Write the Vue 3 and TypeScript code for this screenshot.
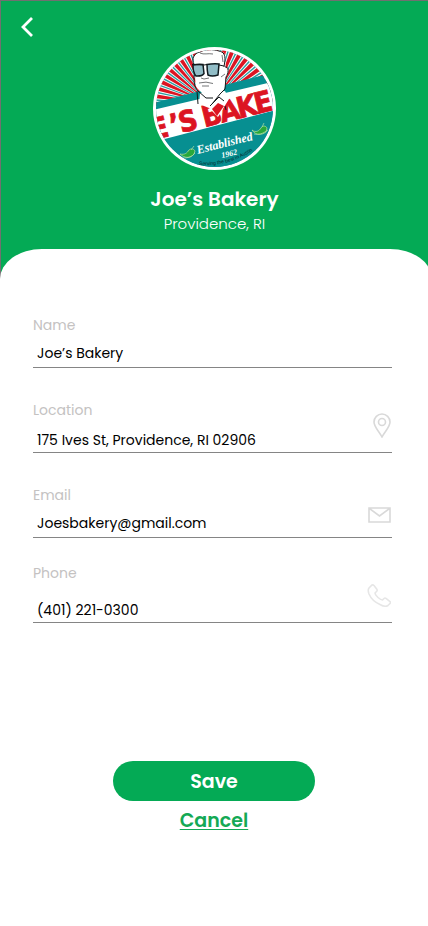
<script setup lang="ts">
import { ref } from 'vue'

type IconName = 'none' | 'pin' | 'mail' | 'phone'

interface Field {
  id: string
  label: string
  type: string
  value: string
  icon: IconName
  variant: string
}

const fields = ref<Field[]>([
  { id: 'name', label: 'Name', type: 'text', value: 'Joe’s Bakery', icon: 'none', variant: '' },
  { id: 'location', label: 'Location', type: 'text', value: '175 Ives St, Providence, RI 02906', icon: 'pin', variant: 'low' },
  { id: 'email', label: 'Email', type: 'email', value: 'Joesbakery@gmail.com', icon: 'mail', variant: '' },
  { id: 'phone', label: 'Phone', type: 'tel', value: '(401) 221-0300', icon: 'phone', variant: 'low tall' },
])

// Sunburst wedges fanning out behind the portrait.
function wedge(deg: number, half: number): string {
  const cx = 58
  const cy = 57
  const point = (a: number, r: number) => {
    const rad = (a * Math.PI) / 180
    return `${(cx + r * Math.cos(rad)).toFixed(1)} ${(cy - r * Math.sin(rad)).toFixed(1)}`
  }
  return `M${point(deg, 4)}L${point(deg - half, 80)}L${point(deg + half, 80)}Z`
}
const rays = Array.from({ length: 25 }, (_, i) => -4 + i * 8)
</script>

<template>
  <main class="page">
    <header class="hero">
      <button class="back" type="button" aria-label="Back">
        <svg width="12" height="20" viewBox="0 0 12 20" aria-hidden="true">
          <path d="M11 1L2 10l9 9" fill="none" stroke="#fff" stroke-width="2.8" />
        </svg>
      </button>
      <svg class="logo" viewBox="0 0 123 123" role="img" aria-label="Joe’s Bakery logo">
        <defs>
          <clipPath id="disc"><circle cx="61.5" cy="61.5" r="58.5" /></clipPath>
          <path id="tagline" d="M46 118Q81 120 109 97" />
        </defs>
        <circle cx="61.500" cy="61.500" r="61.500" fill="#fff" />
        <g clip-path="url(#disc)">
          <rect width="123" height="123" fill="#2b9da0" />
          <path v-for="a in rays" :key="'w' + a" :d="wedge(a, 3.3)" fill="#fff" />
          <path v-for="a in rays" :key="'r' + a" :d="wedge(a, 2.1)" fill="#dc1422" />
          <path d="M0 56L123 25V130H0Z" fill="#078f91" />
          <path d="M0 63L123 34V63L0 95Z" fill="#fff" />
          <g class="brand" transform="rotate(-14 8 92)">
            <text x="0 20 29 53 71 89 107" y="91">E’SBAKE</text>
          </g>
          <path d="M47 46L46 57l10 4 9 9 11-18-4-8Z" fill="#fff" />
          <path d="M59 62l6-6 6 3-7 10Z" fill="#dc1422" />
          <path d="M57 59l9-9M66 50l5 4M72 59l1 4" class="ink" />
          <path d="M42 18C39 12 41 6 47 5c5-3 14-3 20-1 5 1 6 5 5 10l1 7c3 0 3 6 0 9-1 6 0 11-3 14l-7 8-11-3-8-8C41 36 43 27 42 18Z" fill="#fff" />
          <path d="M41 18C38 12 41 6 47 5c5-3 13-3 19-1 5 1 6 4 6 9l-1 7M41 28c0 7 0 12 4 16l8 7 7 0M44 44l1 13M72 20c4-1 4 6 1 10l-1 12-5 5-8 10" class="ink" />
          <path d="M47 6c4 2 8 0 13 1M69 8l1 7M68 30l4-3" class="ink fine" />
          <path d="M40 18q5-1 10-.5l1 9q-2 3-8 2.500-3-3-3-11ZM54 17.500q6-1 12-.5l-1 11q-6 2-10 0-1-5-1-10.500Z" fill="#91bdc7" stroke="#101b20" stroke-width="1.500" />
          <path d="M39 17.500l12 .5 3-.5M66 18l5 1" class="ink" />
          <path d="M48 31l3 1 5-1M46 36q7-2 14 .5M49 39h7" class="ink fine" />
          <g transform="rotate(-14 72 98)">
            <text x="72" y="100" text-anchor="middle" class="script">Established</text>
            <text x="74" y="110" text-anchor="middle" class="year">1962</text>
          </g>
          <g fill="#28a83a" stroke="#b9e3a5" stroke-width=".7">
            <path d="M27 107c5 1 7-1 9-4 2-2 5-1 6 1l-1 3c-4 5-10 4-14 0Z" />
            <path d="M30 111c5 0 9-1 12-5M38 103l3-4" fill="none" />
            <path d="M99 83c4 3 7 1 9-2 2-3 5-2 6 0l-1 4c-4 3-10 4-14-2Z" />
            <path d="M101 87c5 1 8 0 14-4M109 80l2-4" fill="none" />
          </g>
          <text class="tag"><textPath href="#tagline">Serving the best in Austin</textPath></text>
        </g>
      </svg>
      <h1 class="title">Joe’s Bakery</h1>
      <p class="place">Providence, RI</p>
    </header>

    <form class="sheet" @submit.prevent>
      <div class="fields">
        <div v-for="f in fields" :key="f.id" class="field" :class="f.variant">
          <label :for="f.id">{{ f.label }}</label>
          <input :id="f.id" v-model="f.value" :type="f.type" />
          <svg v-if="f.icon === 'pin'" class="icon" width="18" height="25" viewBox="0 0 18 25" aria-hidden="true">
            <path d="M9 24C6 18 1 14 1 9a8 8 0 0 1 16 0c0 5-5 9-8 15Z" />
            <circle cx="9" cy="9" r="3.500" />
          </svg>
          <svg v-else-if="f.icon === 'mail'" class="icon" width="23" height="16" viewBox="0 0 23 16" aria-hidden="true">
            <path d="M1 1h21v14H1ZM1.500 1.500l10 7.500 10-7.500" />
          </svg>
          <svg v-else-if="f.icon === 'phone'" class="icon faint" width="24" height="24" viewBox="0 0 24 24" aria-hidden="true">
            <path d="M2 4l3-3q1-.5 2 .5l3 4q.5 1-.5 2l-1.500 1.500q0 2 3 4.500t4.500 2.500l1.500-1.500q1-1 2 0l4 3q1 1 0 2l-2 2q-3 2-8-1Q5 17 2 10 .5 6 2 4Z" />
          </svg>
        </div>
      </div>
      <div class="actions">
        <button class="save" type="submit">Save</button>
        <a class="cancel" href="#">Cancel</a>
      </div>
    </form>
  </main>
</template>

<style>
body {
  margin: 0;
  background: #fff;
}
</style>

<style scoped>
.page {
  display: flex;
  flex-direction: column;
  min-height: 100vh;
  overflow: hidden;
  font-family: Poppins, Inter, sans-serif;
  color: #000;
}

.hero {
  display: flex;
  flex-direction: column;
  align-items: center;
  padding: 16px 0 43px;
  border-top: 1px solid #707070;
  border-left: 1px solid #707070;
  background: #04aa55;
  color: #fff;
}

.back {
  display: flex;
  align-self: flex-start;
  margin: 0 20px 10px;
  padding: 0;
  border: 0;
  background: none;
  cursor: pointer;
}

.logo {
  display: block;
  width: 123px;
  height: 123px;
}

.brand {
  font: bold 29px 'DejaVu Sans Condensed', 'Liberation Sans', sans-serif;
  fill: #dc1422;
  stroke: #dc1422;
  stroke-width: 0.8;
}

.script {
  font: italic bold 12px 'Liberation Serif', serif;
  fill: #fff;
}

.year {
  font: italic bold 8px 'Liberation Serif', serif;
  fill: #fff;
}

.tag {
  font: 5px 'Liberation Sans', sans-serif;
  fill: #06262a;
}

.ink {
  fill: none;
  stroke: #15191b;
  stroke-width: 1;
}

.fine {
  stroke-width: 0.6;
}

.title {
  margin: 17px 0 0;
  font-size: 20px;
  font-weight: 600;
  line-height: 24px;
}

.place {
  margin: 0;
  font-size: 15px;
  font-weight: 300;
  line-height: 25px;
}

.sheet {
  flex: 1;
  margin: -30px -4px 0 0;
  padding: 34px 4px 40px 0;
  border-radius: 42px 42px 0 0 / 30px 30px 0 0;
  background: #fff;
}

.fields {
  padding: 0 36px 0 33px;
}

.field {
  display: grid;
  grid-template-columns: 1fr auto;
  grid-template-rows: 20px 32px;
  align-content: end;
  box-sizing: border-box;
  min-height: 85px;
  border-bottom: 1px solid #858585;
}

.field.tall {
  grid-template-rows: 20px 39px;
}

label {
  color: #c4c2c2;
  font-size: 14px;
  line-height: 20px;
}

input {
  grid-row: 2;
  align-self: end;
  box-sizing: border-box;
  width: 100%;
  min-width: 0;
  height: 24px;
  padding: 0 4px 4px;
  border: 0;
  outline: 0;
  background: none;
  color: #000;
  font: inherit;
  font-size: 14px;
  line-height: 20px;
}

.low input {
  height: 22px;
  padding-bottom: 2px;
}

.icon {
  grid-column: 2;
  grid-row: 1 / 3;
  align-self: end;
  margin: 0 1px 14px 0;
  fill: none;
  stroke: #d9d9d9;
  stroke-width: 1.6;
}

.faint {
  stroke: #e6e6e6;
}

.actions {
  display: flex;
  flex-direction: column;
  align-items: center;
  gap: 8px;
  margin-top: 138px;
}

.save {
  width: 202px;
  height: 40px;
  padding: 0;
  border: 0;
  border-radius: 20px;
  background: #04aa55;
  color: #fff;
  font: inherit;
  font-size: 19px;
  font-weight: 600;
  cursor: pointer;
}

.cancel {
  color: #14a955;
  font-size: 19px;
  font-weight: 600;
  line-height: 24px;
  text-decoration-thickness: 1px;
  text-underline-offset: 2px;
}
</style>
